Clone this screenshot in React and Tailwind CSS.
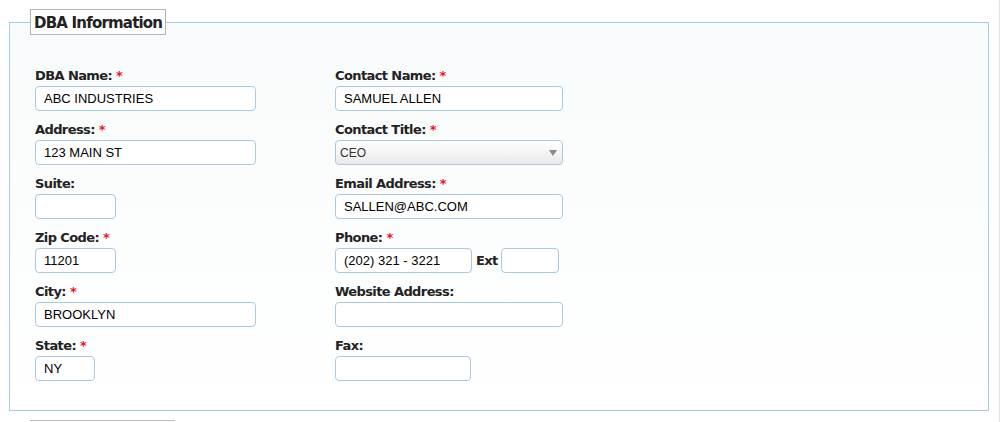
import React from 'react'

const LABEL = "block h-5 leading-5 text-[13px] tracking-[-0.6px] font-bold text-[#222] font-['DejaVu_Sans',sans-serif]"
const INPUT = "block h-[25px] rounded-[4px] border border-[#a9c9e2] bg-white px-2 text-[13px] text-[#000] font-['Liberation_Sans',Arial,sans-serif] outline-none"

function Req() {
  return <span className="ml-1 text-[#e8141e]">*</span>
}

function Field({ label, req, value, width, children }) {
  return (
    <div className="mb-[9px]">
      <label className={LABEL}>
        {label}
        {req && <Req />}
      </label>
      {children || <input className={INPUT} style={{ width }} defaultValue={value} />}
    </div>
  )
}

function TitleSelect() {
  return (
    <div className="relative h-[25px] w-[228px] rounded-[4px] border border-[#a9c9e2] bg-linear-to-b from-white to-[#e9e9e9] flex items-center pl-[4px]">
      <span className="text-[12px] text-[#333] font-['Liberation_Sans',Arial,sans-serif]">CEO</span>
      <svg className="absolute right-[5px] top-[9px]" width="8" height="6" viewBox="0 0 8 6">
        <path d="M0 0 L8 0 L4 6 Z" fill="#8a8a8a" />
      </svg>
    </div>
  )
}

const LEFT = [
  { label: 'DBA Name:', req: true, value: 'ABC INDUSTRIES', width: 221 },
  { label: 'Address:', req: true, value: '123 MAIN ST', width: 221 },
  { label: 'Suite:', req: false, value: '', width: 81 },
  { label: 'Zip Code:', req: true, value: '11201', width: 81 },
  { label: 'City:', req: true, value: 'BROOKLYN', width: 221 },
  { label: 'State:', req: true, value: 'NY', width: 60 },
]

export default function App() {
  return (
    <div className="w-[1000px] h-[422px] overflow-hidden bg-white border-r border-[#e3e3e3] pl-[9px] pt-[9px]">
      <fieldset className="w-[980px] h-[402px] border border-[#a3cbe3] bg-linear-to-b from-[#f8fbfb] to-white px-[20px]">
        <legend className="border border-[#b4b4b4] bg-white px-[3px] h-[26px] leading-[26px] text-[15px] tracking-[-0.8px] font-bold text-[#222] font-['DejaVu_Sans',sans-serif]">
          DBA Information
        </legend>
        <div className="pl-[5px] pt-[31px] flex">
          {/* Left column */}
          <div className="w-[300px]">
            {LEFT.map(f => (
              <Field key={f.label} {...f} />
            ))}
          </div>

          {/* Right column */}
          <div>
            <Field label="Contact Name:" req value="SAMUEL ALLEN" width={228} />
            <Field label="Contact Title:" req>
              <TitleSelect />
            </Field>
            <Field label="Email Address:" req value="SALLEN@ABC.COM" width={228} />
            <Field label="Phone:" req>
              <div className="flex items-center">
                <input className={INPUT} style={{ width: 137 }} defaultValue="(202) 321 - 3221" />
                <span className="ml-[4px] mr-[3px] text-[13px] tracking-[-0.6px] font-bold text-[#222] font-['DejaVu_Sans',sans-serif]">Ext</span>
                <input className={INPUT} style={{ width: 58 }} defaultValue="" />
              </div>
            </Field>
            <Field label="Website Address:" value="" width={228} />
            <Field label="Fax:" value="" width={136} />
          </div>
        </div>
      </fieldset>
      <div className="ml-[21px] mt-[9px] w-[145px] border-t border-[#bdbdbd]" />
    </div>
  )
}
